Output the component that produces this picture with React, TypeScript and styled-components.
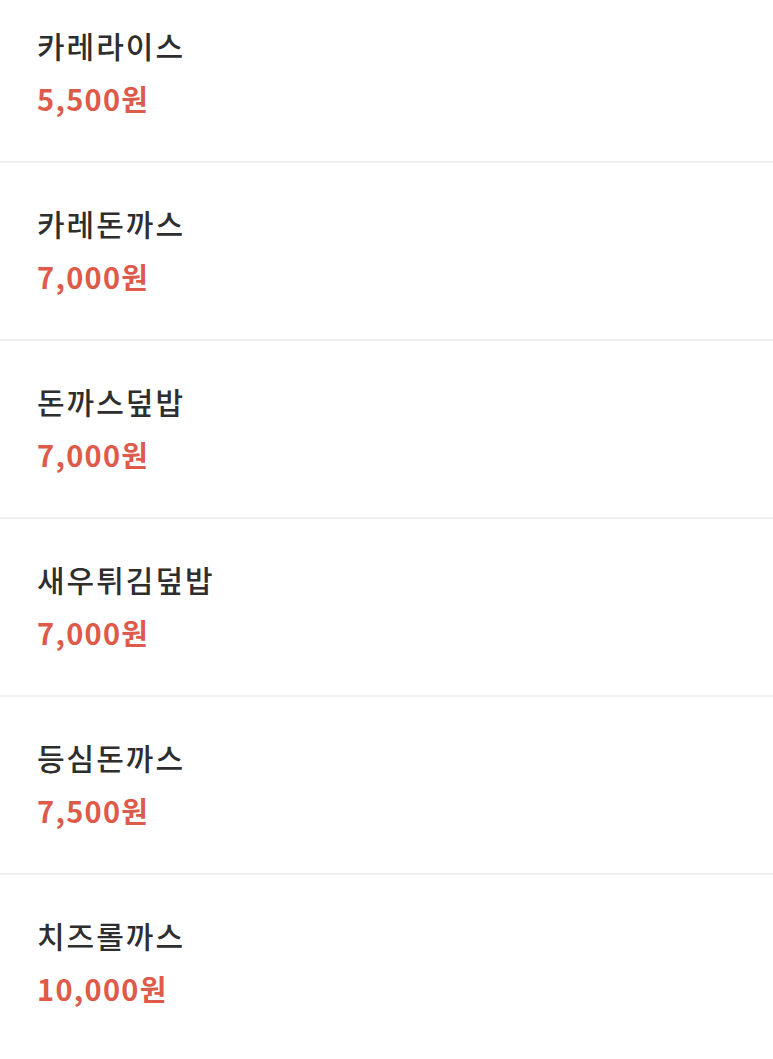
import styled, { createGlobalStyle } from 'styled-components';

interface MenuItem {
    name: string;
    price: string;
}

const menu: MenuItem[] = [
    { name: '카레라이스', price: '5,500원' },
    { name: '카레돈까스', price: '7,000원' },
    { name: '돈까스덮밥', price: '7,000원' },
    { name: '새우튀김덮밥', price: '7,000원' },
    { name: '등심돈까스', price: '7,500원' },
    { name: '치즈롤까스', price: '10,000원' },
];

const GlobalStyle = createGlobalStyle`
  html, body {
    margin: 0;
    padding: 0;
    background: #ffffff;
    overflow: hidden;
  }
  body {
    font-family: 'Noto Sans CJK KR', 'Noto Sans', sans-serif;
  }
`;

// list is scrolled a little, so the first row starts above the window
const List = styled.ul`
  list-style: none;
  margin: -15px 0 0;
  padding: 0;
`;

const Row = styled.li`
  display: flex;
  flex-direction: column;
  height: 178px;
  box-sizing: border-box;
  padding: 41px 37px 0;
  border-bottom: 2px solid #efefef;

  &:last-child {
    border-bottom: none;
  }
`;

const Name = styled.div`
  font-size: 30px;
  line-height: 39px;
  font-weight: 500;
  color: #2e2e2e;
  letter-spacing: 2px;
`;

const Price = styled.div`
  margin-top: 14px;
  font-size: 29px;
  line-height: 39px;
  font-weight: 700;
  color: #de5a4a;
  letter-spacing: 1.3px;
`;

export default function App() {
    return (
        <>
            <GlobalStyle />
            <List>
                {menu.map((item) => (
                    <Row key={item.name}>
                        <Name>{item.name}</Name>
                        <Price>{item.price}</Price>
                    </Row>
                ))}
            </List>
        </>
    );
}
